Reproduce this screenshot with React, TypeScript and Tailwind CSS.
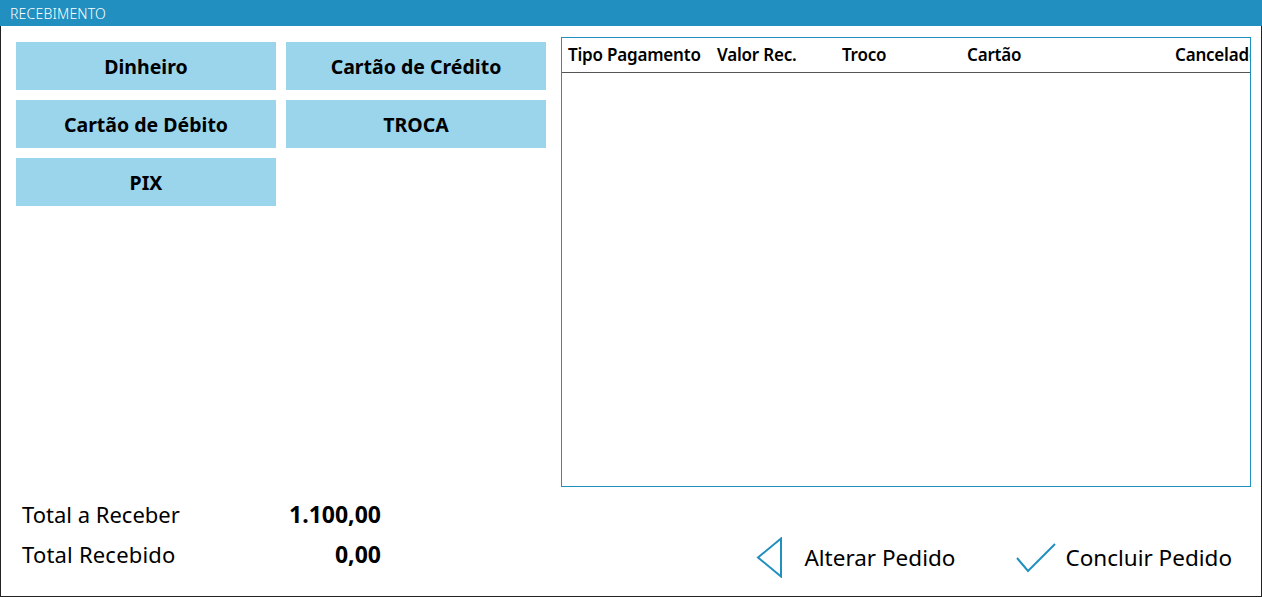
import { useState } from "react";

const metodos = ["Dinheiro", "Cartão de Crédito", "Cartão de Débito", "TROCA", "PIX"];

const colunas = [
    { label: "Tipo Pagamento", w: "w-[149px]" },
    { label: "Valor Rec.", w: "w-[125px]" },
    { label: "Troco", w: "w-[125px]" },
    { label: "Cartão", w: "w-[208px]" },
    { label: "Cancelado", w: "w-[120px]" },
];

export default function App() {
    const [pagamentos] = useState<string[][]>([]);

    return (
        <div className="w-[1262px] h-[597px] flex flex-col bg-white text-black font-['Noto_Sans',sans-serif] overflow-hidden">
            {/* barra de titulo */}
            <div className="h-[26px] shrink-0 bg-[#218fbf] flex items-center pl-[10px]">
                <span className="text-white text-[14px] font-light tracking-[0.2px]">RECEBIMENTO</span>
            </div>

            <div className="flex-1 flex flex-col border-l border-r border-b border-[#222]">
                <div className="flex h-[461px] shrink-0">
                    <div className="pl-[15px] pt-[16px]">
                        <div className="grid grid-cols-[260px_260px] auto-rows-[48px] gap-[10px]">
                            {metodos.map((m) => (
                                <button key={m} className="bg-[#9bd5ec] font-bold text-[19.5px] flex items-center justify-center pt-[1px]">
                                    {m}
                                </button>
                            ))}
                        </div>
                    </div>

                    {/* grade de pagamentos */}
                    <div className="ml-[15px] mt-[11px] w-[690px] h-[450px] border border-[#218fbf] overflow-hidden">
                        <div className="h-[35px] flex items-center pl-[6px] pr-[1px] border-b border-[#555] whitespace-nowrap overflow-hidden">
                            {colunas.map((c) => (
                                <div key={c.label} className={`${c.w} shrink-0 text-[17px] font-semibold tracking-[-0.2px]`}>
                                    {c.label}
                                </div>
                            ))}
                        </div>
                        {pagamentos.map((p, i) => (
                            <div key={i} className="flex">{p.join(" ")}</div>
                        ))}
                    </div>
                </div>

                <div className="flex items-start pt-[7px]">
                    <div className="pl-[21px] w-[380px] text-[22px]">
                        <div className="h-[40px] flex items-center justify-between">
                            <span>Total a Receber</span>
                            <span className="font-bold text-[23px]">1.100,00</span>
                        </div>
                        <div className="h-[40px] flex items-center justify-between">
                            <span className="tracking-[0.2px]">Total Recebido</span>
                            <span className="font-bold text-[23px]">0,00</span>
                        </div>
                    </div>

                    <div className="ml-auto mt-[43px] mr-[29px] flex items-center text-[22.5px]">
                        <button className="flex items-center gap-[21px]">
                            <svg width="27" height="41" viewBox="0 0 27 41" fill="none" stroke="#218fbf" strokeWidth="2">
                                <path d="M25 1.5 L2 20.5 L25 39.5 Z" strokeLinejoin="miter" />
                            </svg>
                            <span>Alterar Pedido</span>
                        </button>
                        <button className="flex items-center gap-[9px] ml-[61px]">
                            <svg width="40" height="30" viewBox="0 0 40 30" fill="none" stroke="#218fbf" strokeWidth="2">
                                <path d="M1 15 L12 28 L39 1" />
                            </svg>
                            <span>Concluir Pedido</span>
                        </button>
                    </div>
                </div>
            </div>
        </div>
    );
}
